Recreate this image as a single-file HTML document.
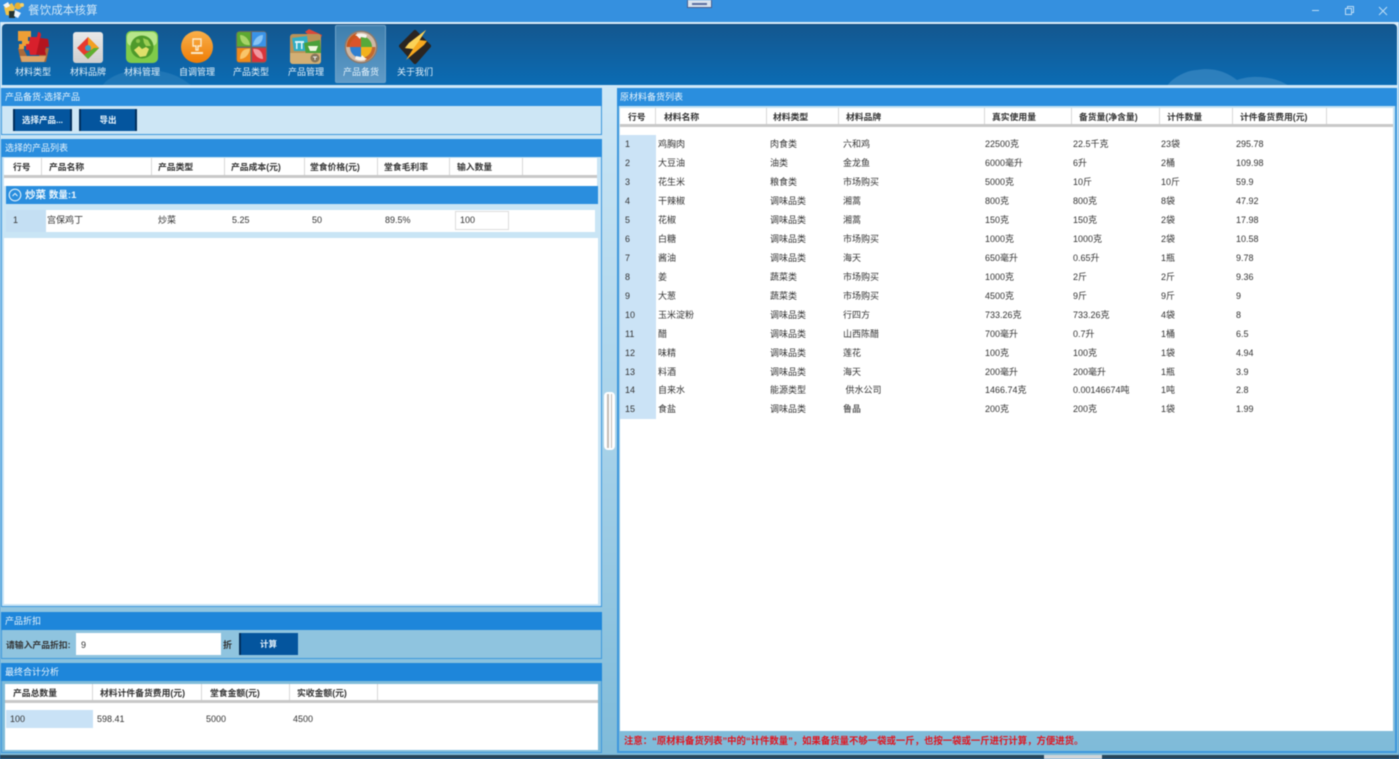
<!DOCTYPE html>
<html lang="zh-CN"><head><meta charset="utf-8"><title>餐饮成本核算</title>
<style>
*{box-sizing:border-box;margin:0;padding:0}
html,body{width:1399px;height:759px;overflow:hidden;background:#3590df}
body{font-family:"Liberation Sans","Noto Sans CJK SC",sans-serif;font-size:9px;color:#333;position:relative}
.a{position:absolute}
.t{position:absolute;white-space:nowrap;line-height:12px}
.title{position:absolute;height:18px;background:#2a8ede;color:#e8f4fc;line-height:18px;padding-left:4px;font-size:9px}
.btn{position:absolute;background:#04559e;border-left:2px solid #022f5c;border-right:2px solid #022f5c;color:#e8f4fc;text-align:center;font-weight:bold;font-size:8.5px;height:22px;line-height:22px}
.hd{position:absolute;background:#fff;border-bottom:3px solid #c8c8c8;height:20px}
.hd b{position:absolute;top:3px;font-weight:bold;line-height:12px;white-space:nowrap;color:#333;font-size:8.8px}
.hd i{position:absolute;top:0;bottom:0;width:1px;background:#d8d8d8}
.r{position:absolute;left:620px;width:770px;height:19px}
.r span{position:absolute;top:3px;line-height:12px;white-space:nowrap}
.r span:nth-child(1){left:0;top:0;width:36px;height:19px;background:#cbe3f6;padding:3px 0 0 5px}
.r span:nth-child(2){left:38px}.r span:nth-child(3){left:150px}.r span:nth-child(4){left:223px}
.r span:nth-child(5){left:365px}.r span:nth-child(6){left:453px}.r span:nth-child(7){left:541px}.r span:nth-child(8){left:616px}
.lab{position:absolute;top:66px;width:52px;text-align:center;color:#e2f1fb;font-size:9px;line-height:12px}
svg{position:absolute;overflow:visible}
</style></head><body>
<div style="position:absolute;inset:0;filter:blur(.4px)">

<!-- title bar -->
<svg style="left:1px;top:0" width="24" height="22" viewBox="0 0 24 22"><path d="M3 7l8-4 3 5-3 8-6-1z" fill="#f3c44a"/><circle cx="17" cy="6" r="3.500" fill="#e8b030"/><path d="M2 5l5-3 2 4-4 2z" fill="#f4f4f4"/><rect x="8" y="11" width="6" height="7" fill="#233"/><path d="M14 10l6 3-3 5-4-2z" fill="#edf5fb"/><circle cx="21" cy="5" r="2" fill="#f6d26a"/></svg>
<div class="t" style="left:28px;top:4px;font-size:11.600px;line-height:14px;color:#cfe6f7">餐饮成本核算</div>
<div class="a" style="left:687px;top:0;width:25px;height:8px;background:#d9e3ee;border:1px solid #4a5f90;border-top:none"></div>
<div class="a" style="left:692px;top:3px;width:15px;height:2px;background:#5a6ea0"></div>
<svg style="left:1300px;top:0" width="99" height="22" viewBox="0 0 99 22" fill="none" stroke="#bcdcf5" stroke-width="1"><path d="M12 10.500h7"/><path d="M45.500 8.500h6v6h-6zM47.500 8.500v-2h6v6h-2"/><path d="M79 7l8 8M87 7l-8 8"/></svg>

<!-- main bg -->
<div class="a" style="left:0;top:22px;width:1399px;height:733px;background:linear-gradient(#d6ecf9 0,#c4e2f3 20%,#a9d3ea 55%,#7fbbd9 100%)"></div>
<div class="a" style="left:0;top:22px;width:1399px;height:2px;background:#dcedf9"></div>

<!-- toolbar -->
<div class="a" style="left:2px;top:24px;width:1395px;height:61px;background:linear-gradient(#14578f,#0b6cb4);border-radius:4px 4px 0 0;overflow:hidden;border-top:1px solid #0d4a80">
 <svg style="left:0;top:0" width="1395" height="61" viewBox="0 0 1395 61"><path d="M100 61c8-12 30-18 50-16 20 2 30 8 40 16z" fill="#3f8cc4" opacity=".4"/><path d="M1165 61c5-8 20-16 30-16 16-3 30 2 40 10 16-6 40-3 52 6z" fill="#3f8cc4" opacity=".65"/></svg>
</div>
<div class="a" style="left:335px;top:25px;width:51px;height:58px;background:linear-gradient(#3f7fae,#5f9bc8);border-radius:2px;border:1px solid #6ea2c8"></div>
<div class="a" style="left:0;top:85px;width:1399px;height:2px;background:#cfe8f8"></div>

<!-- toolbar icons -->
<svg style="left:16px;top:30px" width="36" height="34" viewBox="0 0 36 34"><path d="M2 18h5l4 8h12l5-8h5l-3 14H5z" fill="#a9683a"/><path d="M4 26h26l-2 6H6z" fill="#dca468"/><path d="M2 1h13v6h-3v4h3v5H8v3H3v-5h3v-3H2z" fill="#ee9f36"/><path d="M22 2c3 0 4 3 2 6l8 1 1 8-3 0-1 4 1 4H14l-1-5h-3v-6h3l1-7h7z" fill="#d8202c"/><path d="M24 8l8 1 1 8-3 0-1 4 1 4H20z" fill="#b4151f"/></svg>
<svg style="left:73px;top:32px" width="30" height="31" viewBox="0 0 30 31"><defs><linearGradient id="g2" x1="0" y1="0" x2="0" y2="1"><stop offset="0" stop-color="#e9e9e9"/><stop offset="1" stop-color="#cfcfcf"/></linearGradient></defs><rect width="30" height="31" rx="3" fill="url(#g2)"/><path d="M15 5l11 11-11 11L4 16z" fill="#e8392e"/><path d="M15 5l11 11-5 5-6-6z" fill="#f4a020"/><path d="M26 16L15 27l-4-4 10-7z" fill="#5cb030"/><circle cx="15" cy="16" r="3" fill="#3aa0c8"/></svg>
<svg style="left:126px;top:31px" width="32" height="32" viewBox="0 0 32 32"><rect width="32" height="32" rx="5" fill="#7fcb4a"/><rect x="1" y="1" width="30" height="14" rx="5" fill="#b7e68a"/><circle cx="16" cy="16" r="11.500" fill="#4e9a2b"/><path d="M8 19l5-4 3 3 4-2 3 2-3 7-6 1z" fill="#dfe06a"/><path d="M17 7l5 2 3 6-5 0-2-3z" fill="#9ccf54"/><circle cx="12" cy="10" r="2" fill="#8ac24a"/></svg>
<svg style="left:181px;top:31px" width="32" height="33" viewBox="0 0 32 33"><defs><linearGradient id="o" x1="0" y1="0" x2="0" y2="1"><stop offset="0" stop-color="#f9b04a"/><stop offset="1" stop-color="#ee7c05"/></linearGradient></defs><circle cx="16" cy="16" r="16" fill="url(#o)"/><path d="M12 8h8v7h-3v4h-2v-4h-3z" fill="none" stroke="#fbe9c8" stroke-width="1.400"/><path d="M10 21h12v2H10z" fill="#fbe9c8"/></svg>
<svg style="left:236px;top:31px" width="31" height="32" viewBox="0 0 31 32"><rect width="31" height="32" rx="4" fill="#666"/><path d="M1 3a2 2 0 0 1 2-2h11.500v14.500H1z" fill="#5ea832"/><path d="M16 1h12a2 2 0 0 1 2 2v12.500H16z" fill="#3a93e8"/><path d="M1 17h13.500v14H3a2 2 0 0 1-2-2z" fill="#ef8a1a"/><path d="M16 17h14v12a2 2 0 0 1-2 2H16z" fill="#d9343a"/><path d="M14 14c-1-6-5-10-10-10 0 6 3 11 10 10z" fill="#a8d468"/><path d="M17 14c1-6 5-10 10-10 0 6-3 11-10 10z" fill="#87c4f5"/><path d="M14 18c-1 6-5 10-10 10 0-6 3-11 10-10z" fill="#f9c56a"/><path d="M17 18c1 6 5 10 10 10 0-6-3-11-10-10z" fill="#f298a0"/></svg>
<svg style="left:289px;top:29px" width="34" height="35" viewBox="0 0 34 35"><path d="M16 3l4-3 13 6-3 8z" fill="#d9483a"/><rect x="1" y="5" width="31" height="30" rx="3" fill="#b99358"/><path d="M3 9l15-2 2 15H5z" fill="#2faec6"/><path d="M15 14l16-3 1 13-15 2z" fill="#4aa03a"/><path d="M6 12h9v2H6zM7 14h1.500v6H7zM12 14h1.500v6H12z" fill="#dff3f8"/><path d="M19 17h10l-2 5-6 0z" fill="#eef8e0"/><path d="M1 24h31v8a3 3 0 0 1-3 3H4a3 3 0 0 1-3-3z" fill="#d3af74"/><circle cx="26" cy="29" r="4.500" fill="#86765a"/><path d="M24 28h4M26 28v3" stroke="#eee" stroke-width="1"/></svg>
<svg style="left:344px;top:30px" width="34" height="34" viewBox="0 0 34 34"><circle cx="17" cy="17" r="16.500" fill="#8d7a6c"/><circle cx="17" cy="17" r="15" fill="#cfb8a4"/><path d="M2.500 17a14.500 14.500 0 0 1 10-14l1 4A11 11 0 0 0 6 17z" fill="#c8561e"/><path d="M31.500 17a14.500 14.500 0 0 1-10 14l-1-4A11 11 0 0 0 28 17z" fill="#c26a30"/><path d="M17 6a11 11 0 0 0-11 11h11z" fill="#d9542a"/><path d="M17 6a11 11 0 0 1 11 11H17z" fill="#56a93a"/><path d="M6 17a11 11 0 0 0 11 11V17z" fill="#2f7fd0"/><path d="M28 17a11 11 0 0 1-11 11V17z" fill="#f2b21d"/><path d="M11 5c4-2 8-2 12 0l-1 3 -5-1-1 2-3-3z" fill="#f7f4ee"/><path d="M23 29c-4 2-8 2-12 0l1-3 5 1 1-2 3 3z" fill="#f7f4ee"/></svg>
<svg style="left:398px;top:29px" width="34" height="35" viewBox="0 0 34 35"><path d="M17 3l14 14-14 16L3 17z" fill="#2a2522" stroke="#2a2522" stroke-width="4" stroke-linejoin="round"/><path d="M28 1L11 14 7 19l8 1-7 11 18-15 3-4-8-1z" fill="#f8a91f"/><path d="M28 1L11 14 7 19l8 1 6-8z" fill="#fbd257"/></svg>

<div class="lab" style="left:7px">材料类型</div>
<div class="lab" style="left:62px">材料品牌</div>
<div class="lab" style="left:116px">材料管理</div>
<div class="lab" style="left:171px">自调管理</div>
<div class="lab" style="left:225px">产品类型</div>
<div class="lab" style="left:280px">产品管理</div>
<div class="lab" style="left:335px">产品备货</div>
<div class="lab" style="left:389px">关于我们</div>

<!-- LEFT panel 1 -->
<div class="title" style="left:1px;top:88px;width:601px">产品备货-选择产品</div>
<div class="a" style="left:1px;top:106px;width:601px;height:29px;background:#cde6f5;border:1px solid #3d97dc;border-top:none"></div>
<div class="btn" style="left:13px;top:109px;width:59px">选择产品...</div>
<div class="btn" style="left:79px;top:109px;width:58px">导出</div>

<!-- LEFT panel 2 -->
<div class="title" style="left:1px;top:139px;width:601px">选择的产品列表</div>
<div class="a" style="left:1px;top:157px;width:601px;height:450px;background:#c9e5f5;border:1px solid #3d97dc;border-top:none"></div>
<div class="hd" style="left:4px;top:158px;width:593px">
 <b style="left:9px">行号</b><i style="left:37px"></i>
 <b style="left:45px">产品名称</b><i style="left:147px"></i>
 <b style="left:154px">产品类型</b><i style="left:220px"></i>
 <b style="left:227px">产品成本(元)</b><i style="left:300px"></i>
 <b style="left:306px">堂食价格(元)</b><i style="left:373px"></i>
 <b style="left:380px">堂食毛利率</b><i style="left:445px"></i>
 <b style="left:453px">输入数量</b><i style="left:518px"></i>
</div>
<div class="a" style="left:4px;top:178px;width:593px;height:8px;background:#fff"></div>
<div class="a" style="left:6px;top:186px;width:592px;height:18px;background:#2a8ede"></div>
<svg style="left:8px;top:188px" width="14" height="14" viewBox="0 0 14 14" fill="none" stroke="#dff0fb" stroke-width="1.100"><circle cx="7" cy="7" r="5.800"/><path d="M4.500 8L7 5.500 9.500 8"/></svg>
<div class="t" style="left:25px;top:189px;color:#eef7fd;font-weight:bold;font-size:10.500px">炒菜 <span style="font-size:9.500px">数量:1</span></div>
<div class="a" style="left:6px;top:210px;width:40px;height:22px;background:#c4dff3"></div>
<div class="a" style="left:46px;top:210px;width:549px;height:22px;background:#fff"></div>
<div class="t" style="left:13px;top:214px">1</div>
<div class="t" style="left:47px;top:214px">宫保鸡丁</div>
<div class="t" style="left:158px;top:214px">炒菜</div>
<div class="t" style="left:232px;top:214px">5.25</div>
<div class="t" style="left:312px;top:214px">50</div>
<div class="t" style="left:385px;top:214px">89.5%</div>
<div class="a" style="left:455px;top:211px;width:54px;height:19px;background:#fff;border:1px solid #dcdcdc"></div>
<div class="t" style="left:460px;top:214px">100</div>
<div class="a" style="left:4px;top:238px;width:594px;height:366px;background:#fff"></div>

<!-- LEFT panel 3 -->
<div class="title" style="left:1px;top:612px;width:601px;background:#1e86da">产品折扣</div>
<div class="a" style="left:1px;top:630px;width:601px;height:29px;background:#8fc4df;border:1px solid #3d97dc;border-top:none"></div>
<div class="t" style="left:6px;top:639px;font-weight:bold;font-size:8.800px">请输入产品折扣:</div>
<div class="a" style="left:76px;top:633px;width:145px;height:22px;background:#fff"></div>
<div class="t" style="left:81px;top:639px">9</div>
<div class="t" style="left:223px;top:639px;font-weight:bold">折</div>
<div class="btn" style="left:239px;top:633px;width:59px;border-right-color:#04559e">计算</div>

<!-- LEFT panel 4 -->
<div class="title" style="left:1px;top:663px;width:601px;background:#1e86da">最终合计分析</div>
<div class="a" style="left:1px;top:681px;width:601px;height:72px;background:#7fbbd9;border:1px solid #3d97dc;border-top:none"></div>
<div class="hd" style="left:5px;top:684px;width:593px;height:19px">
 <b style="left:8px">产品总数量</b><i style="left:87px"></i>
 <b style="left:95px">材料计件备货费用(元)</b><i style="left:196px"></i>
 <b style="left:205px">堂食金额(元)</b><i style="left:284px"></i>
 <b style="left:292px">实收金额(元)</b><i style="left:372px"></i>
</div>
<div class="a" style="left:5px;top:703px;width:593px;height:47px;background:#fff"></div>
<div class="a" style="left:6px;top:710px;width:87px;height:18px;background:#c9e2f6"></div>
<div class="t" style="left:10px;top:713px">100</div>
<div class="t" style="left:97px;top:713px">598.41</div>
<div class="t" style="left:206px;top:713px">5000</div>
<div class="t" style="left:293px;top:713px">4500</div>

<!-- splitter -->
<div class="a" style="left:604px;top:392px;width:11px;height:58px;background:#fff;border-radius:4px"></div>
<div class="a" style="left:607px;top:394px;width:1.500px;height:54px;background:#c4bdb6"></div>
<div class="a" style="left:610.500px;top:394px;width:1.500px;height:54px;background:#c4bdb6"></div>

<!-- RIGHT -->
<div class="title" style="left:617px;top:88px;width:780px;padding-left:3px">原材料备货列表</div>
<div class="a" style="left:617px;top:106px;width:780px;height:647px;background:linear-gradient(#c4e2f3,#7fbbd9);border:2px solid #3d97dc;border-top:none"></div>
<div class="a" style="left:620px;top:127px;width:773px;height:604px;background:#fff"></div>
<div class="hd" style="left:620px;top:108px;width:773px;height:19px">
 <b style="left:8px">行号</b><i style="left:35px"></i>
 <b style="left:44px">材料名称</b><i style="left:146px"></i>
 <b style="left:153px">材料类型</b><i style="left:218px"></i>
 <b style="left:226px">材料品牌</b><i style="left:364px"></i>
 <b style="left:372px">真实使用量</b><i style="left:451px"></i>
 <b style="left:459px">备货量(净含量)</b><i style="left:539px"></i>
 <b style="left:547px">计件数量</b><i style="left:612px"></i>
 <b style="left:620px">计件备货费用(元)</b><i style="left:706px"></i>
</div>
<div class="r" style="top:135px"><span>1</span><span>鸡胸肉</span><span>肉食类</span><span>六和鸡</span><span>22500克</span><span>22.5千克</span><span>23袋</span><span>295.78</span></div>
<div class="r" style="top:154px"><span>2</span><span>大豆油</span><span>油类</span><span>金龙鱼</span><span>6000毫升</span><span>6升</span><span>2桶</span><span>109.98</span></div>
<div class="r" style="top:173px"><span>3</span><span>花生米</span><span>粮食类</span><span>市场购买</span><span>5000克</span><span>10斤</span><span>10斤</span><span>59.9</span></div>
<div class="r" style="top:192px"><span>4</span><span>干辣椒</span><span>调味品类</span><span>湘蒿</span><span>800克</span><span>800克</span><span>8袋</span><span>47.92</span></div>
<div class="r" style="top:211px"><span>5</span><span>花椒</span><span>调味品类</span><span>湘蒿</span><span>150克</span><span>150克</span><span>2袋</span><span>17.98</span></div>
<div class="r" style="top:230px"><span>6</span><span>白糖</span><span>调味品类</span><span>市场购买</span><span>1000克</span><span>1000克</span><span>2袋</span><span>10.58</span></div>
<div class="r" style="top:249px"><span>7</span><span>酱油</span><span>调味品类</span><span>海天</span><span>650毫升</span><span>0.65升</span><span>1瓶</span><span>9.78</span></div>
<div class="r" style="top:268px"><span>8</span><span>姜</span><span>蔬菜类</span><span>市场购买</span><span>1000克</span><span>2斤</span><span>2斤</span><span>9.36</span></div>
<div class="r" style="top:287px"><span>9</span><span>大葱</span><span>蔬菜类</span><span>市场购买</span><span>4500克</span><span>9斤</span><span>9斤</span><span>9</span></div>
<div class="r" style="top:306px"><span>10</span><span>玉米淀粉</span><span>调味品类</span><span>行四方</span><span>733.26克</span><span>733.26克</span><span>4袋</span><span>8</span></div>
<div class="r" style="top:325px"><span>11</span><span>醋</span><span>调味品类</span><span>山西陈醋</span><span>700毫升</span><span>0.7升</span><span>1桶</span><span>6.5</span></div>
<div class="r" style="top:344px"><span>12</span><span>味精</span><span>调味品类</span><span>莲花</span><span>100克</span><span>100克</span><span>1袋</span><span>4.94</span></div>
<div class="r" style="top:363px"><span>13</span><span>料酒</span><span>调味品类</span><span>海天</span><span>200毫升</span><span>200毫升</span><span>1瓶</span><span>3.9</span></div>
<div class="r" style="top:381px"><span>14</span><span>自来水</span><span>能源类型</span><span>&nbsp;供水公司</span><span>1466.74克</span><span>0.00146674吨</span><span>1吨</span><span>2.8</span></div>
<div class="r" style="top:400px"><span>15</span><span>食盐</span><span>调味品类</span><span>鲁晶</span><span>200克</span><span>200克</span><span>1袋</span><span>1.99</span></div>
<div class="t" style="left:624px;top:735px;color:#e0141e;font-weight:bold;font-size:9.400px">注意：“原材料备货列表”中的“计件数量”，如果备货量不够一袋或一斤，也按一袋或一斤进行计算，方便进货。</div>

<!-- bottom -->
<div class="a" style="left:0;top:755px;width:1399px;height:4px;background:#27455a"></div>
<div class="a" style="left:1044px;top:755px;width:58px;height:4px;background:#cfd4d8"></div>
</div>
</body></html>
